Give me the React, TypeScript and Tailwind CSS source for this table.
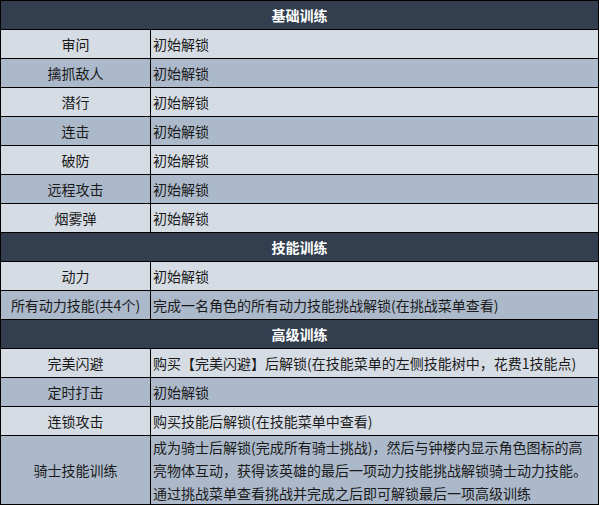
import React from "react";

const LIGHT = "bg-[#d6dce4]";
const DARK = "bg-[#acb9ca]";

type Row = { name: string; desc: React.ReactNode; dark: boolean; tall?: boolean };

function Header({ title }: { title: string }) {
  return (
    <div className="h-[29px] border-b border-black bg-[#333f4f] flex items-center justify-center text-white font-bold text-[14px]">
      {title}
    </div>
  );
}

function DataRow({ r }: { r: Row }) {
  return (
    <div className={`flex border-b border-black ${r.dark ? DARK : LIGHT} ${r.tall ? "h-[69px]" : "h-[29px]"}`}>
      <div className="w-[150px] shrink-0 border-r border-black flex items-center justify-center">{r.name}</div>
      <div className="flex-1 flex flex-col justify-center pl-[2px] leading-[23px]">{r.desc}</div>
    </div>
  );
}

const basic: Row[] = [
  { name: "审问", desc: "初始解锁", dark: false },
  { name: "擒抓敌人", desc: "初始解锁", dark: true },
  { name: "潜行", desc: "初始解锁", dark: false },
  { name: "连击", desc: "初始解锁", dark: true },
  { name: "破防", desc: "初始解锁", dark: false },
  { name: "远程攻击", desc: "初始解锁", dark: true },
  { name: "烟雾弹", desc: "初始解锁", dark: false },
];

const skill: Row[] = [
  { name: "动力", desc: "初始解锁", dark: false },
  { name: "所有动力技能(共4个)", desc: "完成一名角色的所有动力技能挑战解锁(在挑战菜单查看)", dark: true },
];

const adv: Row[] = [
  { name: "完美闪避", desc: "购买【完美闪避】后解锁(在技能菜单的左侧技能树中，花费1技能点)", dark: false },
  { name: "定时打击", desc: "初始解锁", dark: true },
  { name: "连锁攻击", desc: "购买技能后解锁(在技能菜单中查看)", dark: false },
  {
    name: "骑士技能训练",
    dark: true,
    tall: true,
    desc: (
      <>
        <div className="whitespace-nowrap">成为骑士后解锁(完成所有骑士挑战)，然后与钟楼内显示角色图标的高</div>
        <div className="whitespace-nowrap">亮物体互动，获得该英雄的最后一项动力技能挑战解锁骑士动力技能。</div>
        <div className="whitespace-nowrap">通过挑战菜单查看挑战并完成之后即可解锁最后一项高级训练</div>
      </>
    ),
  },
];

export default function App() {
  return (
    <div className="w-[600px] h-[505px] bg-white">
      <div
        className="w-[599px] border-l border-t border-r border-black text-[14px] text-[#1a1a1a]"
        style={{ fontFamily: '"Noto Sans CJK SC", "Microsoft YaHei", sans-serif' }}
      >
        <Header title="基础训练" />
        {basic.map((r) => (
          <DataRow key={r.name} r={r} />
        ))}
        <Header title="技能训练" />
        {skill.map((r) => (
          <DataRow key={r.name} r={r} />
        ))}
        <Header title="高级训练" />
        {adv.map((r) => (
          <DataRow key={r.name} r={r} />
        ))}
      </div>
    </div>
  );
}
